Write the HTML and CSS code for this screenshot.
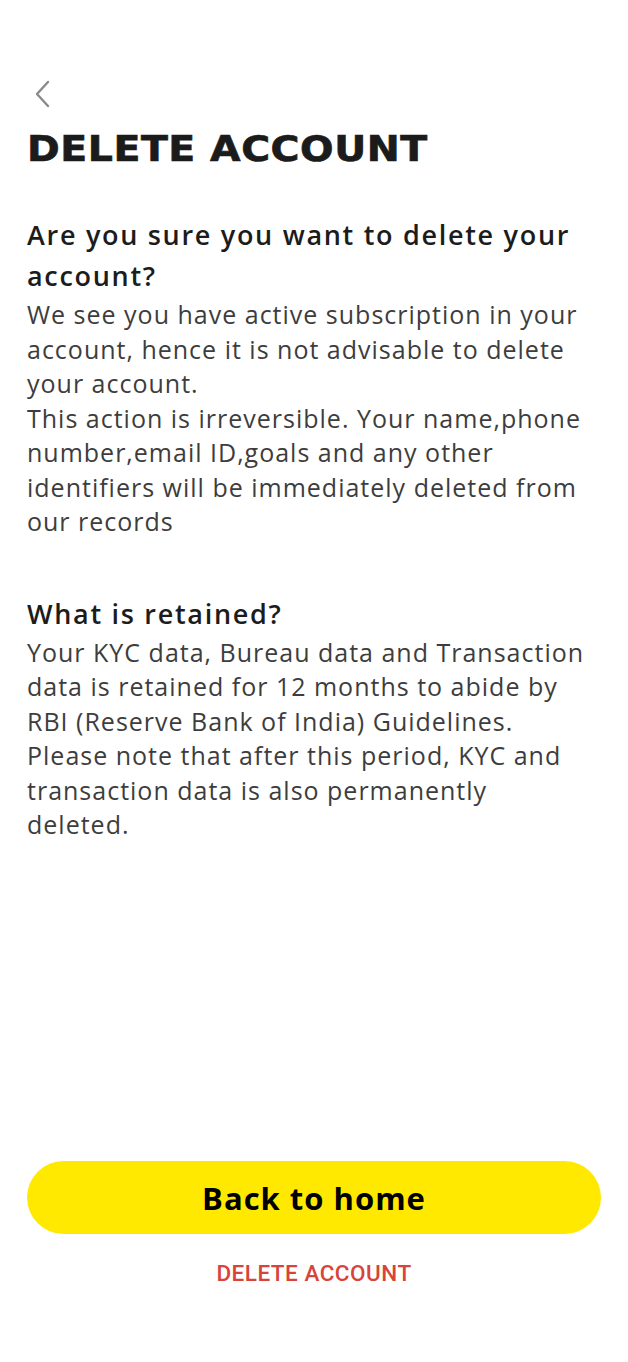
FILE: index.html
```html
<!DOCTYPE html>
<html>
    <head>
        <meta charset="utf-8">
        <title>Delete account</title>
        <link rel="stylesheet" href="styles.css">
    </head>
    <body>
        <div class="page">
            <div class="content">
                <button class="back" aria-label="Back">
                    <svg width="20" height="28" viewBox="0 0 20 28"><path d="M15 2 L4 14 L15 26" fill="none" stroke="#8a8a8a" stroke-width="2.4" stroke-linecap="round" stroke-linejoin="round"/></svg>
                </button>
                <h1 class="title">DELETE ACCOUNT</h1>

                <h2 class="question">Are you sure you want to delete your account?</h2>
                <p class="text">We see you have active subscription in your account, hence it is not advisable to delete your account.<br>This action is irreversible. Your name,phone number,email ID,goals and any other identifiers will be immediately deleted from our records</p>

                <h2 class="question retained">What is retained?</h2>
                <p class="text">Your KYC data, Bureau data and Transaction data is retained for 12 months to abide by RBI (Reserve Bank of India) Guidelines.<br>Please note that after this period, KYC and transaction data is also permanently deleted.</p>
            </div>
            <div class="actions">
                <button class="home_btn">Back to home</button>
                <button class="delete_btn">DELETE ACCOUNT</button>
            </div>
        </div>
    </body>
</html>
```

FILE: styles.css
```css
body {
    margin: 0;
    background: #ffffff;
    font-family: "Open Sans", "Noto Sans", sans-serif;
}
.page {
    min-height: 1362px;
    display: flex;
    flex-direction: column;
    box-sizing: border-box;
    padding: 0 27px;
}
.content {
    flex: 1;
}
.back {
    display: block;
    background: none;
    border: 0;
    padding: 0;
    margin: 80px 0 0 6px;
    width: 20px;
    height: 28px;
    cursor: pointer;
}
.title {
    font-family: "DejaVu Sans", sans-serif;
    font-weight: 900;
    font-size: 36px;
    letter-spacing: 0.5px;
    color: #1b1b1b;
    -webkit-text-stroke: 0.7px #1b1b1b;
    margin: 16px 0 0;
    line-height: 50px;
    transform: scaleX(1.095);
    transform-origin: left center;
}
.question {
    font-size: 27px;
    font-weight: 600;
    letter-spacing: 1.7px;
    color: #1c1c1c;
    line-height: 41px;
    margin: 40px 0 0;
}
.retained {
    margin-top: 54px;
}
.text {
    font-size: 25px;
    letter-spacing: 1px;
    color: #3d3d3d;
    line-height: 34.5px;
    margin: 1px 0 0;
    max-width: 565px;
}
.actions {
    display: flex;
    flex-direction: column;
    align-items: center;
    padding-bottom: 75px;
}
.home_btn {
    width: 100%;
    height: 73px;
    border: 0;
    border-radius: 37px;
    background: #ffe900;
    color: #000000;
    font-family: "Open Sans", sans-serif;
    font-weight: 700;
    font-size: 31px;
    letter-spacing: 1px;
    cursor: pointer;
}
.delete_btn {
    margin-top: 25px;
    background: none;
    border: 0;
    color: #d8443a;
    font-family: Roboto, sans-serif;
    font-weight: 500;
    font-size: 22.5px;
    letter-spacing: 0.5px;
    cursor: pointer;
}
```
